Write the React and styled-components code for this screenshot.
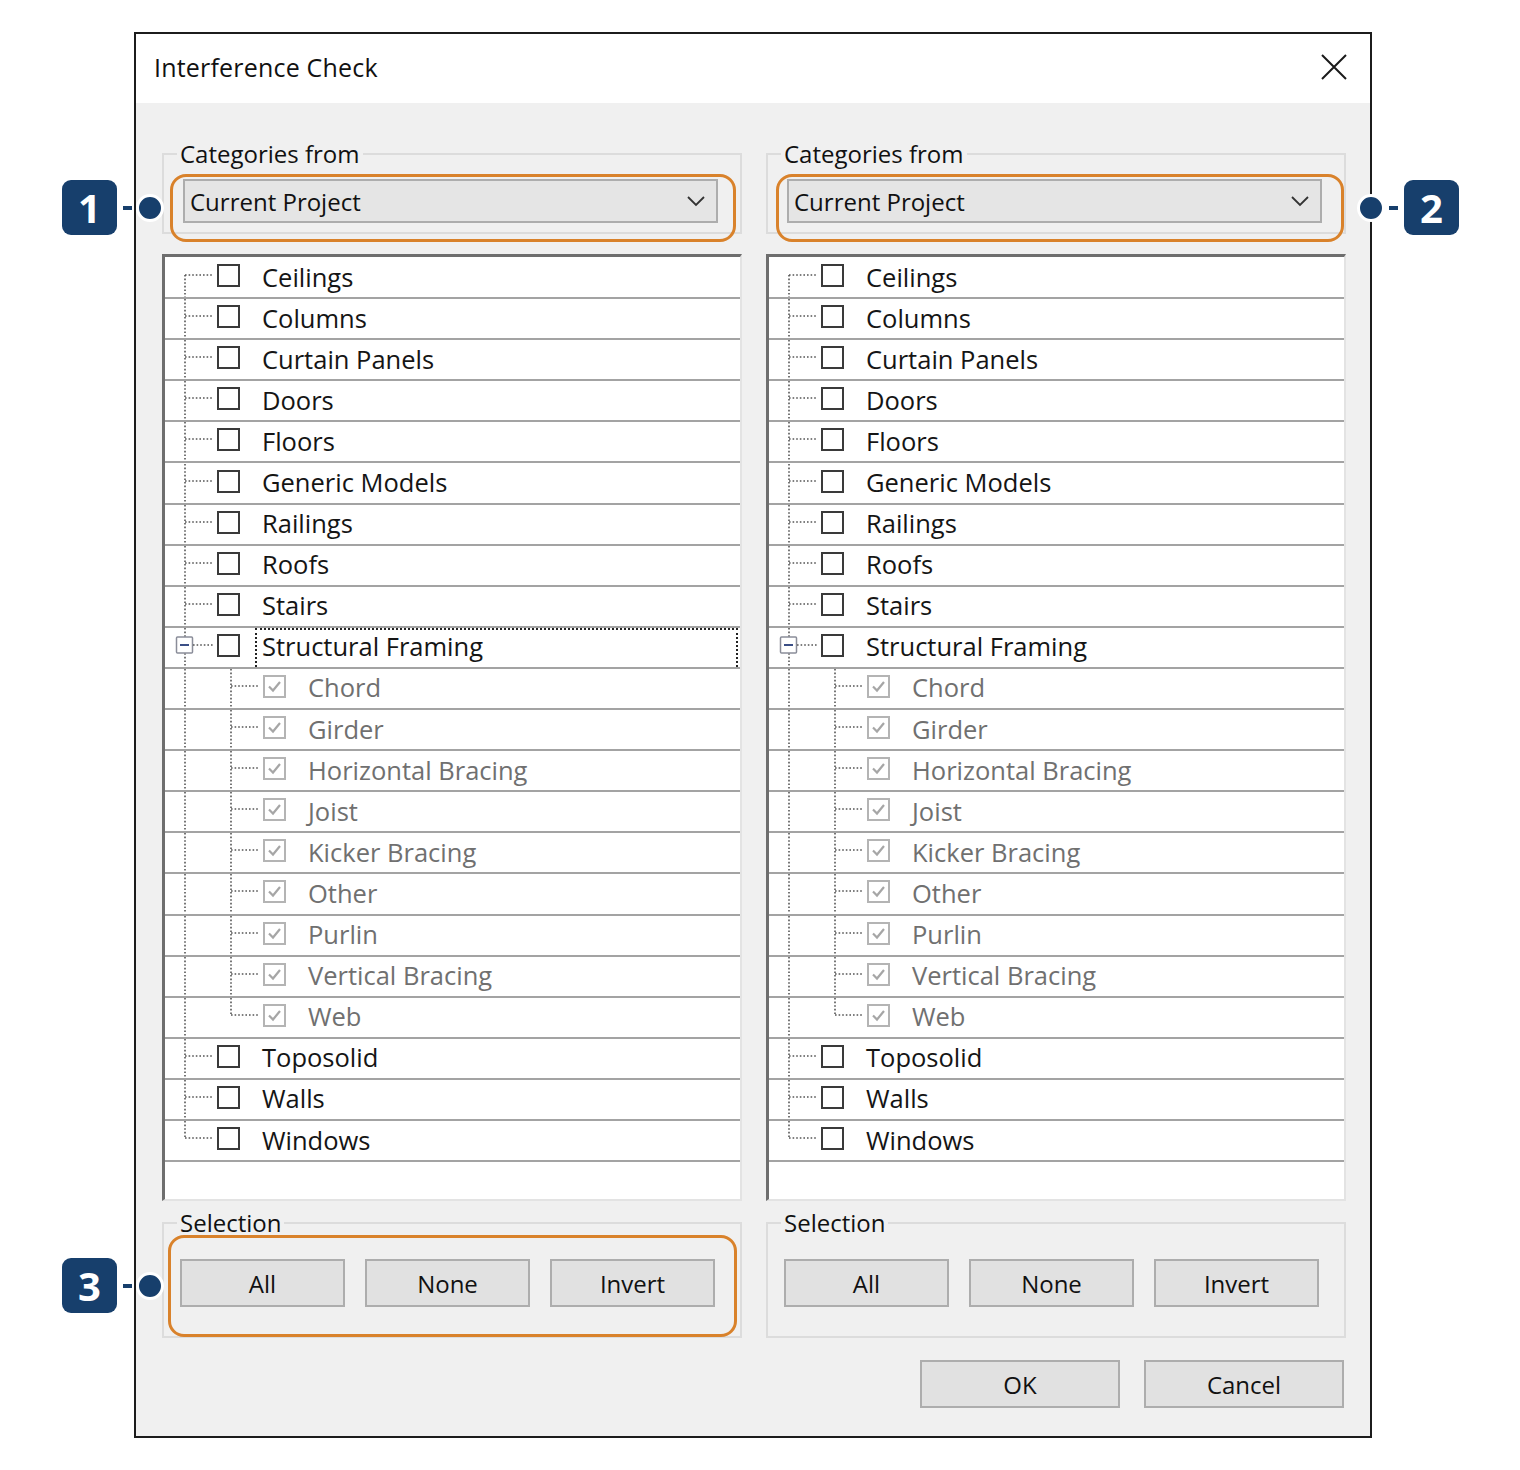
import React from "react";
import styled, { createGlobalStyle } from "styled-components";

const GlobalStyle = createGlobalStyle`
    html, body {
        margin: 0;
        padding: 0;
        background: #ffffff;
    }
    body {
        font-family: "Open Sans", "Noto Sans", sans-serif;
        color: #111;
    }
`;

const Stage = styled.div`
    padding: 32px 0 0 134px;
    width: 1520px;
    height: 1470px;
    box-sizing: border-box;
`;

const Frame = styled.div`
    position: relative;
    width: 1238px;
`;

const Dialog = styled.div`
    width: 1238px;
    height: 1406px;
    box-sizing: border-box;
    border: 2px solid #1c1c1c;
    background: #f0f0f0;
    display: flex;
    flex-direction: column;
`;

const TitleBar = styled.div`
    height: 69px;
    background: #ffffff;
    display: flex;
    align-items: center;
    justify-content: space-between;
    padding: 0 22px 0 18px;
`;

const Title = styled.div`
    font-size: 25px;
    color: #111;
    letter-spacing: 0.2px;
    margin-top: -3px;
`;

const CloseButton = styled.div`
    width: 28px;
    height: 28px;
    display: flex;
    align-items: center;
    justify-content: center;
    margin-top: -4px;
`;

const Body = styled.div`
    flex: 1;
    padding: 38px 24px 0 26px;
    display: flex;
    flex-direction: column;
`;

const Columns = styled.div`
    display: grid;
    grid-template-columns: 580px 580px;
    column-gap: 24px;
`;

const Column = styled.div`
    display: flex;
    flex-direction: column;
`;

const Group = styled.fieldset`
    position: relative;
    margin: ${(p) => p.$top || 0}px 0 0 0;
    border: 2px solid #dcdcdc;
    padding: ${(p) => p.$pad};
    min-width: 0;
`;

const Legend = styled.legend`
    font-size: 24px;
    line-height: 26px;
    padding: 0 3px;
    margin-left: ${(p) => p.$shift}px;
    color: #111;
`;

const Combo = styled.div`
    height: 44px;
    box-sizing: border-box;
    background: #e5e5e5;
    border: 2px solid #adadad;
    display: flex;
    align-items: center;
    justify-content: space-between;
    padding: 0 10px 0 5px;
    font-size: 24px;
    color: #111;
`;

const Marked = styled.div`
    position: relative;
`;

const Ring = styled.span`
    position: absolute;
    left: ${(p) => p.$l}px;
    top: ${(p) => p.$t}px;
    right: ${(p) => p.$r}px;
    bottom: ${(p) => p.$b}px;
    border: 3.5px solid #d9822b;
    border-radius: 16px;
    pointer-events: none;
`;

const List = styled.div`
    margin-top: 20px;
    height: 947px;
    box-sizing: border-box;
    background: #ffffff;
    border-style: solid;
    border-width: 3px 2px 2px 3px;
    border-color: #6e6e6e #e3e3e3 #e3e3e3 #6e6e6e;
    padding-top: 1px;
    overflow: hidden;
`;

const Row = styled.div`
    height: 41.1px;
    box-sizing: border-box;
    border-bottom: 2px solid #a3a3a3;
    display: flex;
    align-items: center;
`;

const Guides = styled.svg`
    flex: none;
    display: block;
`;

const Box = styled.span`
    flex: none;
    width: 23px;
    height: 23px;
    box-sizing: border-box;
    border: 2px solid ${(p) => (p.$checked ? "#b4b4b4" : "#3a3a3a")};
    background: #fff;
    margin-top: -4px;
    display: flex;
    align-items: center;
    justify-content: center;
`;

const Label = styled.span`
    flex: 1;
    margin: 0 2px 0 15px;
    padding-left: 5px;
    height: 39px;
    box-sizing: border-box;
    display: flex;
    align-items: center;
    padding-bottom: 4px;
    font-size: 25.5px;
    color: ${(p) => (p.$dim ? "#707070" : "#151515")};
    border: 2px dotted ${(p) => (p.$focus ? "#222" : "transparent")};
    border-bottom-width: 0;
    white-space: nowrap;
`;

const ButtonRow = styled.div`
    display: grid;
    grid-template-columns: repeat(3, 165px);
    column-gap: 20px;
`;

const Button = styled.div`
    width: ${(p) => p.$w || 165}px;
    height: 48px;
    box-sizing: border-box;
    background: #e1e1e1;
    border: 2px solid #adadad;
    display: flex;
    align-items: center;
    justify-content: center;
    font-size: 24px;
    color: #111;
`;

const Footer = styled.div`
    margin-top: 22px;
    display: flex;
    justify-content: flex-end;
    gap: 24px;
    padding-right: 2px;
`;

const Callout = styled.div`
    position: absolute;
    left: ${(p) => p.$x}px;
    top: ${(p) => p.$y}px;
    display: flex;
    flex-direction: ${(p) => (p.$flip ? "row-reverse" : "row")};
    align-items: center;
`;

const Badge = styled.div`
    width: 55px;
    height: 55px;
    border-radius: 9px;
    background: #173f6c;
    color: #fff;
    font-family: "Open Sans", sans-serif;
    font-weight: 700;
    font-size: 40px;
    display: flex;
    align-items: center;
    justify-content: center;
`;

const Dash = styled.span`
    width: 9px;
    height: 4px;
    background: #173f6c;
    margin: 0 4px 0 6px;
    ${(p) => p.$flip && "margin: 0 6px 0 4px;"}
`;

const Dot = styled.span`
    width: 22px;
    height: 22px;
    border-radius: 50%;
    background: #173f6c;
    border: 3px solid #fff;
`;

const categories = [
    { name: "Ceilings" },
    { name: "Columns" },
    { name: "Curtain Panels" },
    { name: "Doors" },
    { name: "Floors" },
    { name: "Generic Models" },
    { name: "Railings" },
    { name: "Roofs" },
    { name: "Stairs" },
    { name: "Structural Framing", open: true },
    { name: "Chord", child: true },
    { name: "Girder", child: true },
    { name: "Horizontal Bracing", child: true },
    { name: "Joist", child: true },
    { name: "Kicker Bracing", child: true },
    { name: "Other", child: true },
    { name: "Purlin", child: true },
    { name: "Vertical Bracing", child: true },
    { name: "Web", child: true, lastChild: true },
    { name: "Toposolid" },
    { name: "Walls" },
    { name: "Windows" },
];

const DOT = { stroke: "#555", strokeWidth: 1.6, strokeDasharray: "1.6 2" };

// dotted connector lines of the tree, one slice per row
function TreeLines({ item, first, last }) {
    const h = 39;
    const mid = 17;
    const width = item.child ? 98 : 52;
    return (
        <Guides width={width} height={h} viewBox={`0 0 ${width} ${h}`}>
            <line x1="20" y1={first ? mid : 0} x2="20" y2={last ? mid : h} {...DOT} />
            {item.open ? (
                <g>
                    <rect x="11.5" y={mid - 8} width="16" height="16" fill="#fff" stroke="#8a8d99" strokeWidth="1.5" rx="1" />
                    <line x1="15" y1={mid} x2="24" y2={mid} stroke="#3b4f86" strokeWidth="2" />
                    <line x1="28" y1={mid} x2="48" y2={mid} {...DOT} />
                </g>
            ) : (
                !item.child && <line x1="20" y1={mid} x2="48" y2={mid} {...DOT} />
            )}
            {item.child && (
                <g>
                    <line x1="66" y1="0" x2="66" y2={item.lastChild ? mid : h} {...DOT} />
                    <line x1="66" y1={mid} x2="94" y2={mid} {...DOT} />
                </g>
            )}
        </Guides>
    );
}

function CategoryTree({ focus }) {
    return (
        <List>
            {categories.map((item, i) => (
                <Row key={item.name}>
                    <TreeLines item={item} first={i === 0} last={i === categories.length - 1} />
                    <Box $checked={item.child}>
                        {item.child && (
                            <svg width="15" height="13" viewBox="0 0 15 13">
                                <path d="M2 6.5 L6 10.5 L13 2" fill="none" stroke="#a6a6a6" strokeWidth="2.2" />
                            </svg>
                        )}
                    </Box>
                    <Label $dim={item.child} $focus={focus && item.open}>
                        {item.name}
                    </Label>
                </Row>
            ))}
        </List>
    );
}

function Chevron() {
    return (
        <svg width="20" height="12" viewBox="0 0 20 12">
            <path d="M2 2 L10 10 L18 2" fill="none" stroke="#333" strokeWidth="1.8" />
        </svg>
    );
}

function Panel({ marked, ringCombo, focus }) {
    return (
        <Column>
            <Group $pad="12px 22px 9px 19px">
                <Legend $shift={-6}>Categories from</Legend>
                <Marked>
                    <Combo>
                        Current Project
                        <Chevron />
                    </Combo>
                    {ringCombo && <Ring $l={ringCombo[0]} $t={-5} $r={ringCombo[1]} $b={-19} />}
                </Marked>
            </Group>
            <CategoryTree focus={focus} />
            <Group $top={9} $pad="23px 25px 29px 16px">
                <Legend $shift={-3}>Selection</Legend>
                <Marked>
                    <ButtonRow>
                        <Button>All</Button>
                        <Button>None</Button>
                        <Button>Invert</Button>
                    </ButtonRow>
                    {marked && <Ring $l={-12} $t={-24} $r={-22} $b={-30} />}
                </Marked>
            </Group>
        </Column>
    );
}

export default function App() {
    return (
        <Stage>
            <GlobalStyle />
            <Frame>
                <Dialog>
                    <TitleBar>
                        <Title>Interference Check</Title>
                        <CloseButton>
                            <svg width="26" height="26" viewBox="0 0 26 26">
                                <path d="M1 1 L25 25 M25 1 L1 25" stroke="#1a1a1a" strokeWidth="2" />
                            </svg>
                        </CloseButton>
                    </TitleBar>
                    <Body>
                        <Columns>
                            <Panel ringCombo={[-13, -18]} marked focus />
                            <Panel ringCombo={[-11, -22]} />
                        </Columns>
                        <Footer>
                            <Button $w={200}>OK</Button>
                            <Button $w={200}>Cancel</Button>
                        </Footer>
                    </Body>
                </Dialog>

                <Callout $x={-72} $y={148}>
                    <Badge>1</Badge>
                    <Dash />
                    <Dot />
                </Callout>
                <Callout $x={1223} $y={148} $flip>
                    <Badge>2</Badge>
                    <Dash $flip />
                    <Dot />
                </Callout>
                <Callout $x={-72} $y={1226}>
                    <Badge>3</Badge>
                    <Dash />
                    <Dot />
                </Callout>
            </Frame>
        </Stage>
    );
}
